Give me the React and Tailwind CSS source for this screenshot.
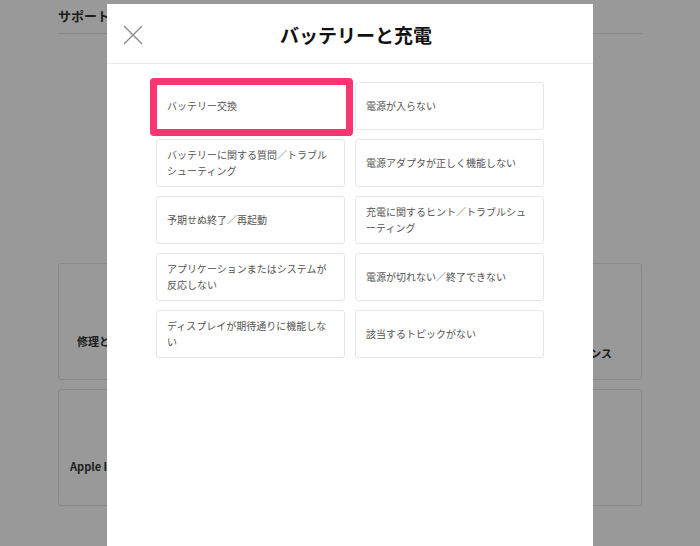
import React from 'react';

const topics = [
    'バッテリー交換',
    '電源が入らない',
    'バッテリーに関する質問／トラブルシューティング',
    '電源アダプタが正しく機能しない',
    '予期せぬ終了／再起動',
    '充電に関するヒント／トラブルシューティング',
    'アプリケーションまたはシステムが反応しない',
    '電源が切れない／終了できない',
    'ディスプレイが期待通りに機能しない',
    '該当するトピックがない',
];

const font = { fontFamily: '"Noto Sans CJK JP", "Noto Sans", sans-serif' };

const TopicCard = ({ label, highlighted }) => (
    <div className="relative">
        <div className={`h-[48px] border ${highlighted ? 'border-white' : 'border-[#e6e6e6]'} rounded-[3px] bg-white flex items-center pl-[10px] pr-[14px]`}>
            <span className="text-[10px] leading-[16px] text-[#555]">{label}</span>
        </div>
        {highlighted && (
            <div className="absolute -left-[6px] -top-[4px] w-[203px] h-[58px] border-[7px] border-[#fb3472] rounded-[4px]"></div>
        )}
    </div>
);

const BackgroundPage = () => (
    <div className="h-[546px] bg-white px-[58px] pt-[6px]">
        <div className="border-b border-[#e5e5e5] pb-[7px]">
            <h2 className="text-[13px] font-bold text-[#333] leading-[20px]">サポート</h2>
        </div>
        <div className="grid grid-cols-3 gap-[9px] mt-[229px]">
            <div className="h-[117px] border border-[#e5e5e5] rounded-[3px] flex items-end pb-[30px] pl-[18px]">
                <span className="text-[11px] font-bold text-[#333]">修理とサービス</span>
            </div>
            <div className="h-[117px] border border-[#e5e5e5] rounded-[3px]"></div>
            <div className="h-[117px] border border-[#e5e5e5] rounded-[3px] flex items-end justify-end pb-[18px] pr-[29px]">
                <span className="text-[11px] font-bold text-[#333] leading-[16px]">メンテナンス</span>
            </div>
            <div className="h-[117px] border border-[#e5e5e5] rounded-[3px] flex items-end pb-[31px] pl-[11px]">
                <span className="text-[11px] font-bold text-[#333]">Apple ID</span>
            </div>
            <div className="h-[117px] border border-[#e5e5e5] rounded-[3px]"></div>
            <div className="h-[117px] border border-[#e5e5e5] rounded-[3px]"></div>
        </div>
    </div>
);

export default function App() {
    return (
        <div className="relative w-[700px] h-[546px] overflow-hidden" style={font}>
            <BackgroundPage />
            <div className="absolute inset-0 bg-black/40"></div>
            <div className="absolute left-[107px] top-[4px] w-[486px] h-[560px] bg-white">
                <header className="relative h-[60px] border-b border-[#ebebeb] flex items-center justify-center">
                    <button className="absolute left-[16px] top-[21px] w-[20px] h-[20px]">
                        <svg viewBox="0 0 20 20" width="20" height="20" fill="none" stroke="#8a8a8a" strokeWidth="1.3">
                            <path d="M1 1 L19 19 M19 1 L1 19" />
                        </svg>
                    </button>
                    <h1 className="text-[19px] font-bold text-[#111] ml-[12px] mt-[3px]">バッテリーと充電</h1>
                </header>
                <div className="grid grid-cols-2 gap-x-[10px] gap-y-[9px] px-[49px] pt-[18px]">
                    {topics.map((t, i) => (
                        <TopicCard key={i} label={t} highlighted={i === 0} />
                    ))}
                </div>
            </div>
        </div>
    );
}
